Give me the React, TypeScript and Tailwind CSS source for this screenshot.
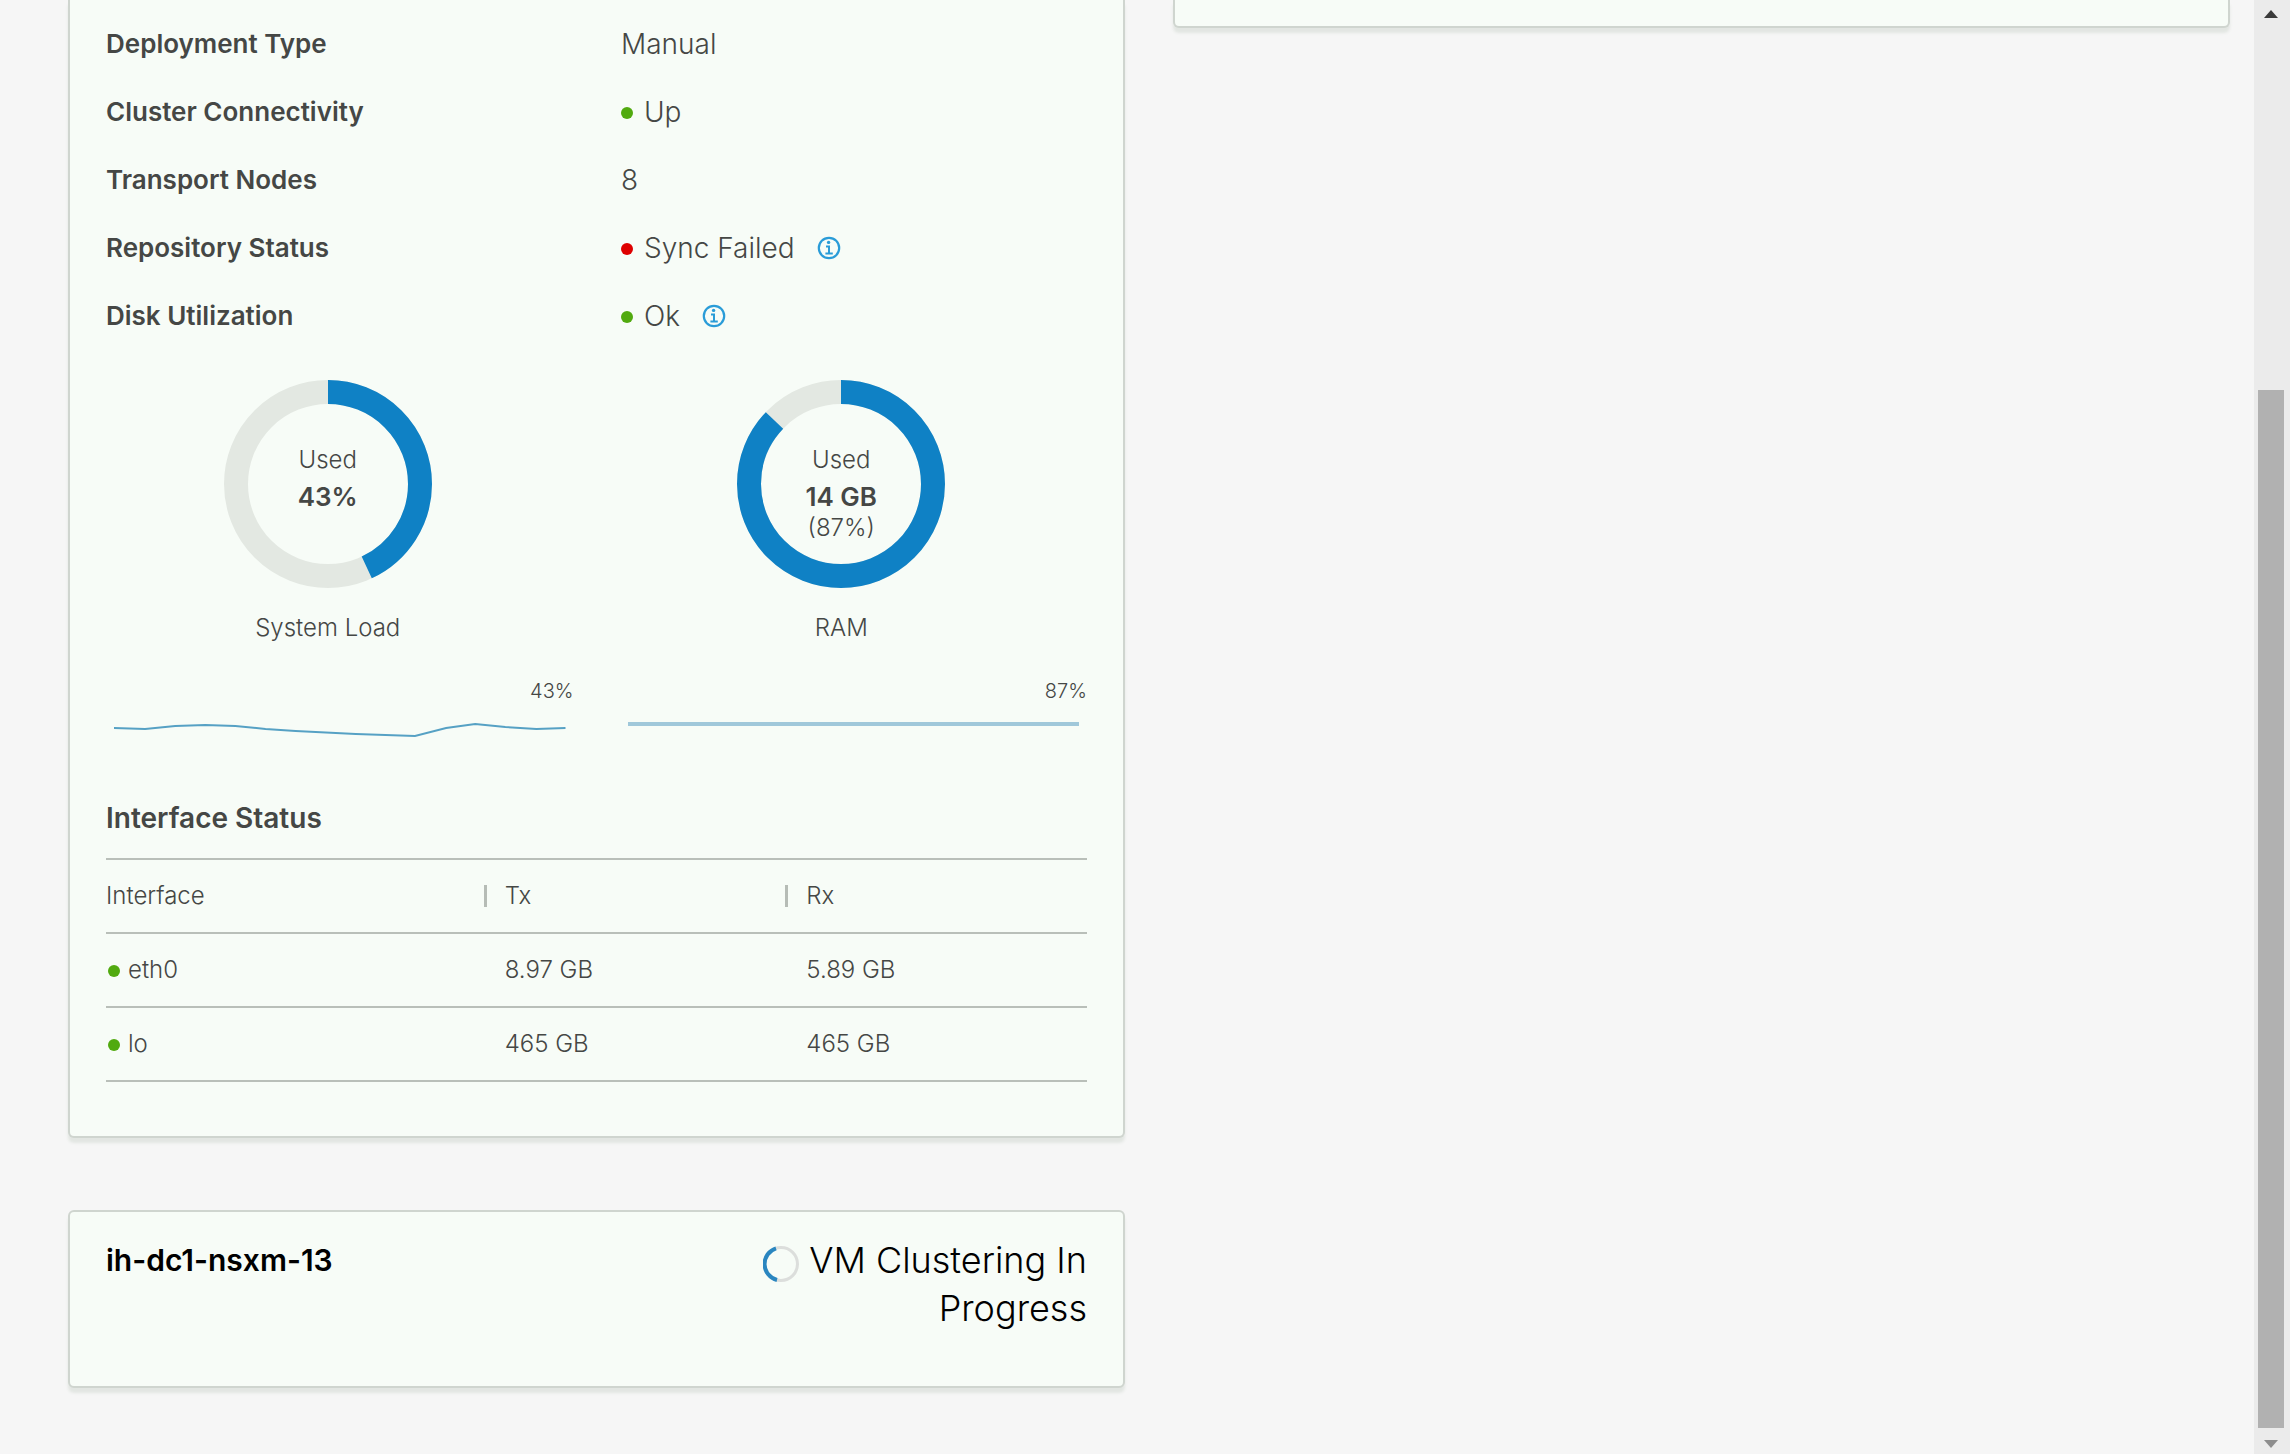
import type { ReactNode } from "react";

const details: { label: string; value: string; dot?: string; info?: boolean }[] = [
  { label: "Deployment Type", value: "Manual" },
  { label: "Cluster Connectivity", value: "Up", dot: "bg-[#51aa0f]" },
  { label: "Transport Nodes", value: "8" },
  { label: "Repository Status", value: "Sync Failed", dot: "bg-[#de0000]", info: true },
  { label: "Disk Utilization", value: "Ok", dot: "bg-[#51aa0f]", info: true },
];

const interfaces = [
  { name: "eth0", tx: "8.97 GB", rx: "5.89 GB" },
  { name: "lo", tx: "465 GB", rx: "465 GB" },
];

function Card({ className, children }: { className: string; children?: ReactNode }) {
  return (
    <section
      className={`border-2 border-[#cfd5cf] bg-[#f7fcf7] shadow-[0_5px_3px_#e2e6e2] ${className}`}
    >
      {children}
    </section>
  );
}

function Dot({ color }: { color: string }) {
  return <span className={`size-3 shrink-0 rounded-full ${color}`} />;
}

function InfoButton({ label }: { label: string }) {
  return (
    <button type="button" aria-label={label} className="ml-[22px] block shrink-0">
      <svg viewBox="0 0 24 24" className="size-6" fill="none" stroke="#2a9cd8">
        <circle cx="12" cy="12" r="10.2" strokeWidth="2.2" />
        <circle cx="11.6" cy="6.4" r="1.7" fill="#2a9cd8" stroke="none" />
        <path d="M9 10.6h3V17.4M8.4 17.6h7.4" strokeWidth="2" />
      </svg>
    </button>
  );
}

function Donut({ percent, children }: { percent: number; children: ReactNode }) {
  const length = 2 * Math.PI * 92;
  return (
    <div className="grid size-[208px] place-items-center">
      <svg viewBox="0 0 208 208" className="col-start-1 row-start-1 size-full" fill="none" strokeWidth="24">
        <circle cx="104" cy="104" r="92" stroke="#e3e8e2" />
        <circle
          cx="104"
          cy="104"
          r="92"
          stroke="#0f81c5"
          strokeDasharray={`${(length * percent) / 100} ${length}`}
          transform="rotate(-90 104 104)"
        />
      </svg>
      <div className="col-start-1 row-start-1 self-start pt-16 text-center text-2xl leading-8 font-light">
        {children}
      </div>
    </div>
  );
}

function Metric({
  name,
  percent,
  donut,
  spark,
}: {
  name: string;
  percent: number;
  donut: ReactNode;
  spark: ReactNode;
}) {
  return (
    <div className="flex flex-col">
      <figure className="flex flex-col items-center">
        <Donut percent={percent}>{donut}</Donut>
        <figcaption className="mt-6 text-2xl leading-8 font-light">{name}</figcaption>
      </figure>
      <span className="mt-8 text-right text-xl leading-[30px] font-light">{percent}%</span>
      <svg viewBox="0 0 450 40" preserveAspectRatio="none" className="mt-[2px] mr-2 ml-8 h-10" fill="none">
        {spark}
      </svg>
    </div>
  );
}

function HeaderCell({ children }: { children: string }) {
  return (
    <th scope="col" className="h-[74px] p-0 font-light">
      <span className="flex items-center">
        <span className="mr-[18px] h-[22px] w-[3px] bg-[#b6bcb6]" />
        {children}
      </span>
    </th>
  );
}

function Scrollbar() {
  return (
    <div className="flex w-9 shrink-0 flex-col bg-[#ebebeb]">
      <button type="button" aria-label="Scroll up" className="flex h-9 justify-center pt-[10px] pr-[2px]">
        <svg viewBox="0 0 14 8" className="h-2 w-[14px]" fill="#3a3a3a">
          <path d="M0 8L7 0l7 8z" />
        </svg>
      </button>
      <div className="flex-[354]" />
      <div className="mr-[6px] ml-1 flex-[1038] bg-[#b1b1b1]" />
      <button type="button" aria-label="Scroll down" className="flex h-[26px] justify-center pt-3 pr-[2px]">
        <svg viewBox="0 0 14 8" className="h-2 w-[14px]" fill="#8d8d8d">
          <path d="M0 0h14L7 8z" />
        </svg>
      </button>
    </div>
  );
}

export default function App() {
  return (
    <div className="flex min-h-screen bg-[#f6f6f6] font-['Inter',sans-serif] text-[#454745]">
      <main className="grid flex-1 grid-cols-2 items-start gap-12 pr-6 pl-[68px]">
        <div className="flex flex-col gap-[72px]">
          <Card className="rounded-b-md border-t-0 px-9 pt-[10px] pb-[54px]">
            <dl>
              {details.map((d) => (
                <div key={d.label} className="grid h-[68px] grid-cols-[21fr_19fr] items-center">
                  <dt className="text-[26px] leading-8 font-semibold">{d.label}</dt>
                  <dd className="flex items-center text-[28px] leading-9 font-light">
                    {d.dot && (
                      <span className="mr-[11px] flex pt-[2px]">
                        <Dot color={d.dot} />
                      </span>
                    )}
                    {d.value}
                    {d.info && <InfoButton label={`${d.label} details`} />}
                  </dd>
                </div>
              ))}
            </dl>

            <div className="-ml-6 grid grid-cols-2 gap-[22px] pt-[30px]">
              <Metric
                name="System Load"
                percent={43}
                donut={
                  <>
                    <div>Used</div>
                    <div className="pt-[2px] text-[26px] leading-[38px] font-semibold">43%</div>
                  </>
                }
                spark={
                  <path
                    d="M0 20L31 21L61 18L91 17L121 18L151 21L181 23L241 26L300 28L331 20L360 16L390 19L421 21L450 20"
                    stroke="#56a1c4"
                    strokeWidth="2"
                  />
                }
              />
              <Metric
                name="RAM"
                percent={87}
                donut={
                  <>
                    <div>Used</div>
                    <div className="pt-[2px] text-[26px] leading-[38px] font-semibold">14 GB</div>
                    <div className="leading-6">(87%)</div>
                  </>
                }
                spark={<path d="M0 16H450" stroke="#a0c8da" strokeWidth="4" />}
              />
            </div>

            <h3 className="mt-[52px] text-[28px] leading-9 font-semibold">Interface Status</h3>
            <table className="mt-[22px] w-full table-fixed border-collapse text-left text-2xl leading-8 font-light">
              <colgroup>
                <col className="w-[38.5%]" />
                <col />
                <col />
              </colgroup>
              <thead>
                <tr className="border-y-2 border-[#b9bfb9]">
                  <th scope="col" className="h-[74px] p-0 font-light">
                    Interface
                  </th>
                  <HeaderCell>Tx</HeaderCell>
                  <HeaderCell>Rx</HeaderCell>
                </tr>
              </thead>
              <tbody>
                {interfaces.map((i) => (
                  <tr key={i.name} className="border-b-2 border-[#b9bfb9]">
                    <td className="h-[74px] p-0">
                      <span className="flex items-center gap-2 pl-[2px]">
                        <span className="flex pt-[2px]">
                          <Dot color="bg-[#51aa0f]" />
                        </span>
                        {i.name}
                      </span>
                    </td>
                    <td className="p-0 pl-[21px]">{i.tx}</td>
                    <td className="p-0 pl-[21px]">{i.rx}</td>
                  </tr>
                ))}
              </tbody>
            </table>
          </Card>

          <Card className="flex min-h-[178px] justify-between rounded-md px-9 pt-6 pb-10 text-black">
            <h2 className="text-[30px] leading-[48px] font-semibold">ih-dc1-nsxm-13</h2>
            <div className="flex w-1/3 justify-end">
              <svg viewBox="0 0 36 36" className="mt-[10px] mr-[10px] size-9 shrink-0" fill="none" strokeWidth="3">
                <circle cx="18" cy="18" r="16.5" stroke="#dcdedc" />
                <path d="M13 2.3A16.5 16.5 0 0 0 14 34" stroke="#2a86c0" strokeWidth="4" />
              </svg>
              <p className="text-right text-4xl leading-[48px] font-light">
                VM Clustering In
                <br />
                Progress
              </p>
            </div>
          </Card>
        </div>

        <Card className="h-7 rounded-b-md border-t-0" />
      </main>
      <Scrollbar />
    </div>
  );
}
